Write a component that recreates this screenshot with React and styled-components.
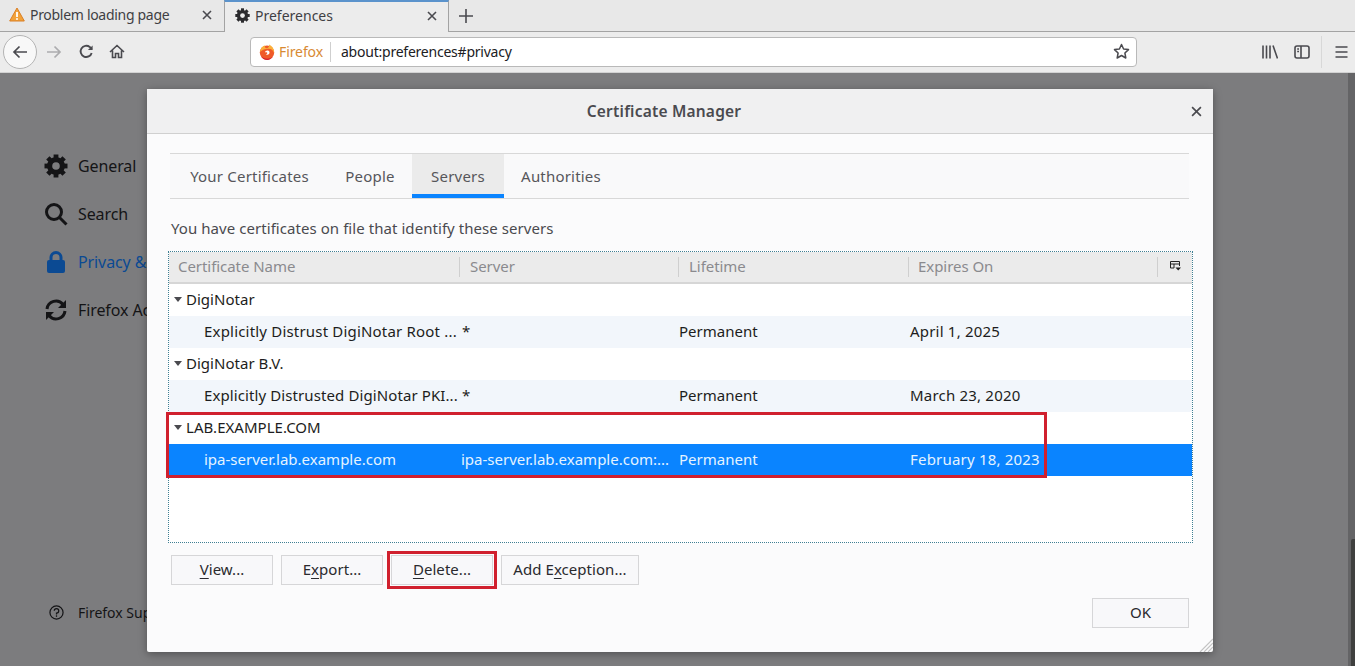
import React from 'react'
import styled, {createGlobalStyle} from 'styled-components'

const font = '"Noto Sans", "Open Sans", sans-serif'

const GlobalStyle = createGlobalStyle`
  html, body {
    margin: 0;
    padding: 0;
    height: 666px;
    overflow: hidden;
    font-family: ${font};
    background: #7c7c7e;
  }
  * { box-sizing: border-box; }
`

const Page = styled.div`
  width: 1355px;
  height: 666px;
  display: flex;
  flex-direction: column;
  overflow: hidden;
`

const TabBar = styled.div`
  height: 32px;
  display: flex;
  align-items: stretch;
  background: #e8e8e8;
  border-bottom: 1px solid #a3a3a3;
`

const Tab = styled.div`
  width: ${({active}) => active ? '225px' : '224px'};
  height: ${({active}) => active ? '32px' : '31px'};
  display: flex;
  align-items: center;
  gap: 5px;
  padding: ${({active}) => active ? '0 11px 3px 10px' : '0 12px 2px 9px'};
  font-size: 14px;
  letter-spacing: ${({active}) => active ? '0' : '-0.3px'};
  color: #3f3f44;
  background: ${({active}) => active ? '#ececec' : 'transparent'};
  border-top: ${({active}) => active ? '2px solid #5b93cc' : 'none'};
  border-left: ${({active}) => active ? '1px solid #a3a3a3' : 'none'};
  border-right: ${({active}) => active ? '1px solid #a3a3a3' : 'none'};
`

const TabTitle = styled.span`
  flex: 1;
  white-space: nowrap;
`

const NewTab = styled.div`
  width: 34px;
  display: flex;
  align-items: center;
  justify-content: center;
  color: #4a4a4f;
`

const NavBar = styled.div`
  height: 41px;
  display: flex;
  align-items: center;
  background: #ececec;
  border-bottom: 1px solid #d2d2d2;
  padding: 0 0 1px 3px;
`

const BackButton = styled.div`
  width: 34px;
  height: 34px;
  border-radius: 50%;
  border: 1px solid #b4b4b4;
  background: #f8f8f8;
  display: flex;
  align-items: center;
  justify-content: center;
  flex-shrink: 0;
`

const NavIcon = styled.div`
  width: ${({w}) => w}px;
  margin-left: ${({gap}) => gap || 0}px;
  height: 24px;
  display: flex;
  align-items: center;
  justify-content: center;
  flex-shrink: 0;
`

const UrlBar = styled.div`
  width: 887px;
  height: 30px;
  margin-left: 118px;
  margin-right: 125px;
  display: flex;
  align-items: center;
  background: #fff;
  border: 1px solid #b9b9b9;
  border-radius: 4px;
  padding: 0 6px 0 8px;
  flex-shrink: 0;
`

const Identity = styled.div`
  display: flex;
  align-items: center;
  gap: 4px;
  height: 20px;
  padding-right: 7px;
  border-right: 1px solid #cfcfcf;
  font-size: 14px;
  letter-spacing: -0.1px;
  color: #d88a33;
`

const UrlText = styled.div`
  flex: 1;
  padding-left: 10px;
  font-size: 14px;
  letter-spacing: -0.23px;
  color: #202023;
`

const ToolDivider = styled.div`
  width: 1px;
  height: 32px;
  background: #d8d8d8;
  margin: 0 6px 0 3px;
  flex-shrink: 0;
`

const Content = styled.div`
  position: relative;
  flex: 1;
  display: flex;
  justify-content: space-between;
  background: #7c7c7e;
  min-height: 0;
`

const Sidebar = styled.nav`
  display: flex;
  flex-direction: column;
  padding: 69px 0 0 44px;
  flex: 1;
`

const SideItem = styled.div`
  height: 48px;
  display: flex;
  align-items: center;
  gap: 10px;
  font-size: 16px;
  letter-spacing: -0.1px;
  white-space: nowrap;
  color: ${({active}) => active ? '#0b4a93' : '#141416'};
`

const SideFooter = styled.div`
  display: flex;
  align-items: center;
  gap: 14px;
  margin-top: auto;
  margin-bottom: 44px;
  padding-left: 5px;
  font-size: 14px;
  white-space: nowrap;
  color: #141416;
`

const ScrollTrack = styled.div`
  width: 7px;
  display: flex;
  justify-content: flex-end;
  padding-top: 466px;
  background: #646466;
`

const ScrollThumb = styled.div`
  width: 4px;
  background: #3f403f;
  border-radius: 2px 0 0 0;
`

const Dialog = styled.div`
  position: absolute;
  left: 147px;
  top: 16px;
  width: 1066px;
  height: 563px;
  display: flex;
  flex-direction: column;
  background: #fbfbfc;
  border-radius: 2px;
  box-shadow: 0 2px 8px rgba(0, 0, 0, 0.35);
`

const TitleBar = styled.div`
  position: relative;
  height: 45px;
  flex-shrink: 0;
  display: flex;
  align-items: center;
  justify-content: center;
  padding-right: 32px;
  background: #f0f0f1;
  border-bottom: 1px solid #d0d0d0;
  font-size: 15.5px;
  letter-spacing: 0.2px;
  font-weight: 600;
  color: #4a4a4f;
`

const CloseButton = styled.div`
  position: absolute;
  right: 11px;
  top: 17px;
  display: flex;
`

const DialogBody = styled.div`
  flex: 1;
  display: flex;
  flex-direction: column;
  padding: 19px 20px 0 21px;
  min-height: 0;
`

const TabStrip = styled.div`
  height: 46px;
  margin: 0 4px 0 2px;
  display: flex;
  background: #f9f9fa;
  border-top: 1px solid #d8d8d8;
  border-bottom: 1px solid #d8d8d8;
  padding-left: 1px;
  flex-shrink: 0;
`

const DialogTab = styled.div`
  width: ${({w}) => w}px;
  display: flex;
  align-items: center;
  justify-content: center;
  font-size: 15px;
  letter-spacing: 0.2px;
  color: #56565a;
  background: ${({active}) => active ? '#ebebeb' : 'transparent'};
  border-bottom: 4px solid ${({active}) => active ? '#0a84ff' : 'transparent'};
  padding-top: 4px;
`

const Description = styled.p`
  margin: 19px 0 13px 3px;
  font-size: 15px;
  line-height: 20px;
  letter-spacing: 0.06px;
  color: #4a4a4f;
`

const Tree = styled.div`
  position: relative;
  height: 292px;
  background: #fff;
  border: 1px dotted #3f7f93;
  flex-shrink: 0;
`

const columns = '290px 219px 230px 249px 35px'

const TreeHead = styled.div`
  display: grid;
  grid-template-columns: ${columns};
  height: 32px;
  align-items: center;
  background: #ebebeb;
  border-bottom: 2px solid #d6d6d6;
`

const HeadCell = styled.div`
  height: 20px;
  display: flex;
  align-items: center;
  padding: 0 0 2px ${({pad}) => pad}px;
  border-left: ${({first}) => first ? 'none' : '1px solid #cfcfcf'};
  font-size: 15px;
  letter-spacing: -0.05px;
  color: #8a8a8e;
`

const GroupRow = styled.div`
  height: 32px;
  display: flex;
  align-items: center;
  gap: 4px;
  padding: 0 0 2px 5px;
  background: #fff;
  font-size: 15px;
  letter-spacing: 0.02px;
  color: #1d1d20;
`

const Twisty = styled.span`
  width: 0;
  height: 0;
  border-left: 4.5px solid transparent;
  border-right: 4.5px solid transparent;
  border-top: 5px solid #4a4a4f;
`

const Row = styled.div`
  display: grid;
  grid-template-columns: ${columns};
  height: 32px;
  align-items: center;
  padding-bottom: 2px;
  font-size: 15px;
  background: ${({selected}) => selected ? '#0a84ff' : '#f2f6fb'};
  color: ${({selected}) => selected ? '#e4f3ff' : '#1d1d20'};
`

const Cell = styled.div`
  white-space: nowrap;
  overflow: hidden;
  padding-left: ${({pad}) => pad}px;
  letter-spacing: ${({tracking}) => tracking || 0}px;
`

const ButtonRow = styled.div`
  display: flex;
  gap: 8px;
  margin: 12px 0 0 3px;
`

const Button = styled.div`
  width: ${({w}) => w}px;
  height: 30px;
  display: flex;
  align-items: center;
  justify-content: center;
  padding-bottom: 2px;
  background: #f8f8fa;
  border: 1px solid #d6d6d8;
  font-size: 15px;
  letter-spacing: 0.05px;
  color: #2a2a2e;
`

const Mnemonic = styled.span`
  text-decoration: underline;
  text-underline-offset: 3px;
  text-decoration-thickness: 1px;
`

const Footer = styled.div`
  display: flex;
  justify-content: flex-end;
  margin: 13px 4px 0 0;
`

const Grip = styled.svg`
  position: absolute;
  right: 0;
  bottom: 0;
`

const Highlight = styled.div`
  position: absolute;
  left: ${({x}) => x}px;
  top: ${({y}) => y}px;
  width: ${({w}) => w}px;
  height: ${({h}) => h}px;
  border: 3px solid #d0202e;
  pointer-events: none;
`

const Gear = ({size, color = '#2b2b2e'}) =>
  <svg width={size} height={size} viewBox="0 0 24 24">
    <circle cx="12" cy="12" r="6.5" fill="none" stroke={color} strokeWidth="5"/>
    {[0, 45, 90, 135].map(a =>
      <rect key={a} x="9.6" y="0.5" width="4.8" height="23" fill={color} transform={`rotate(${a} 12 12)`}/>
    )}
    <circle cx="12" cy="12" r="3.8" fill="var(--hole)"/>
  </svg>

const Cross = ({size = 10, color = '#4a4a4f', width = 1.5}) =>
  <svg width={size} height={size} viewBox="0 0 10 10">
    <path d="M1 1 L9 9 M9 1 L1 9" stroke={color} strokeWidth={width} fill="none"/>
  </svg>

const Warning = () =>
  <svg width="16" height="15" viewBox="0 0 16 15">
    <path d="M8 1 L15.3 14 H0.7 Z" fill="#f2a23a" stroke="#d97f24" strokeWidth="1" strokeLinejoin="round"/>
    <path d="M8 5 V10" stroke="#fff" strokeWidth="1.8"/>
    <circle cx="8" cy="12" r="1" fill="#fff"/>
  </svg>

const FirefoxLogo = () =>
  <svg width="16" height="16" viewBox="0 0 16 16">
    <circle cx="8" cy="8.6" r="7.2" fill="#ef5a29"/>
    <path d="M1 8 C1.5 4 4 1.8 6 1.5 C5.5 3 6 4 7.5 4.3 C10 3.8 10.5 1.8 10 0.5 C13.5 2 15.5 5.5 15 9 C14 6 12.5 5 11 5 C8 4.5 4 5 1 8 Z" fill="#fbb03b"/>
    <path d="M6 8.5 C6 7 7.5 6.2 9 6.5 C10.5 7 11 8.5 10.2 9.8 C9.4 11 7.6 11 6.8 10.2 C7.8 10.2 8.6 9.5 8.2 8.7 C7.5 8.2 6.8 8.2 6 8.5 Z" fill="#fff"/>
    <path d="M2 12 C5 15 10 16 14 12.5 C12 15.5 9 16 8 16 C5.5 16 3.2 14.5 2 12 Z" fill="#d5202f"/>
  </svg>

const Stroke = styled.svg`
  display: block;
  fill: none;
  flex-shrink: 0;
  stroke: ${({color}) => color || '#4a4a4f'};
  stroke-width: ${({sw}) => sw || 2};
`

const App = () =>
  <Page>
    <GlobalStyle/>
    <TabBar>
      <Tab>
        <Warning/>
        <TabTitle>Problem loading page</TabTitle>
        <Cross size={10} width={1.6}/>
      </Tab>
      <Tab active style={{'--hole': '#ececec'}}>
        <Gear size={15}/>
        <TabTitle>Preferences</TabTitle>
        <Cross size={10} width={1.6}/>
      </Tab>
      <NewTab>
        <Stroke width="14" height="14" viewBox="0 0 14 14" sw={1.6}><path d="M7 0 V14 M0 7 H14"/></Stroke>
      </NewTab>
    </TabBar>
    <NavBar>
      <BackButton>
        <Stroke width="16" height="14" viewBox="0 0 16 14" sw={1.7}><path d="M15 7 H2 M7.5 1.5 L2 7 L7.5 12.5"/></Stroke>
      </BackButton>
      <NavIcon w={33}>
        <Stroke width="16" height="14" viewBox="0 0 16 14" sw={1.7} color="#acacae"><path d="M1 7 H14 M8.5 1.5 L14 7 L8.5 12.5"/></Stroke>
      </NavIcon>
      <NavIcon w={32}>
        <Stroke width="15" height="15" viewBox="0 0 16 16" sw={2}><path d="M13.5 9.5 A6 6 0 1 1 11.5 3.2 L13.5 5.5"/><path d="M14.5 1.5 V6.5 H9.5" fill="#4a4a4f" stroke="none"/></Stroke>
      </NavIcon>
      <NavIcon w={30}>
        <Stroke width="16" height="15" viewBox="0 0 16 15" sw={1.6}><path d="M1 8 L8 1.5 L15 8 M3.5 6.5 V13.5 H6.5 V9.5 H9.5 V13.5 H12.5 V6.5"/></Stroke>
      </NavIcon>
      <UrlBar>
        <Identity><FirefoxLogo/>Firefox</Identity>
        <UrlText>about:preferences#privacy</UrlText>
        <Stroke width="17" height="17" viewBox="0 0 17 17" sw={1.5}><path d="M8.5 1.5 L10.6 6 L15.5 6.6 L11.9 10 L12.8 15 L8.5 12.5 L4.2 15 L5.1 10 L1.5 6.6 L6.4 6 Z" strokeLinejoin="round"/></Stroke>
      </UrlBar>
      <NavIcon w={16}>
        <Stroke width="16" height="14" viewBox="0 0 16 14" sw={1.6}><path d="M1 0.5 V13.5 M4.5 0.5 V13.5 M8 0.5 V13.5 M11 0.5 L15.5 13.5"/></Stroke>
      </NavIcon>
      <NavIcon w={32} gap={8}>
        <Stroke width="16" height="14" viewBox="0 0 16 14" sw={1.6}><rect x="1" y="1" width="14" height="12" rx="2"/><path d="M7 1 V13 M3.2 4 H5 M3.2 6.5 H5"/></Stroke>
      </NavIcon>
      <ToolDivider/>
      <NavIcon w={26}>
        <Stroke width="13" height="12" viewBox="0 0 13 12" sw={1.7}><path d="M0.5 1 H12.5 M0.5 6 H12.5 M0.5 11 H12.5"/></Stroke>
      </NavIcon>
    </NavBar>
    <Content>
      <Sidebar style={{'--hole': '#7c7c7e'}}>
        <SideItem><Gear size={24} color="#141416"/>General</SideItem>
        <SideItem>
          <Stroke width="24" height="24" viewBox="0 0 24 24" sw={3} color="#141416"><circle cx="10" cy="10" r="7.5"/><path d="M15.5 15.5 L22.5 22.5"/></Stroke>
          Search
        </SideItem>
        <SideItem active>
          <svg width="24" height="24" viewBox="0 0 24 24">
            <path d="M7 11 V7.5 A5 5 0 0 1 17 7.5 V11" fill="none" stroke="#0b4a93" strokeWidth="3"/>
            <rect x="3" y="10" width="18" height="13" rx="2" fill="#0b4a93"/>
          </svg>
          Privacy &amp; Security
        </SideItem>
        <SideItem>
          <Stroke width="24" height="24" viewBox="0 0 24 24" sw={3} color="#141416">
            <path d="M3 11 A9 9 0 0 1 19 6.5"/>
            <path d="M21 13 A9 9 0 0 1 5 17.5"/>
            <path d="M22 2 V10 H14 Z" fill="#141416" stroke="none"/>
            <path d="M2 22 V14 H10 Z" fill="#141416" stroke="none"/>
          </Stroke>
          Firefox Account
        </SideItem>
        <SideFooter>
          <Stroke width="15" height="15" viewBox="0 0 16 16" sw={1.3} color="#141416">
            <circle cx="8" cy="8" r="7"/>
            <path d="M5.6 6.2 A2.4 2.4 0 1 1 8 8.6 V10"/>
            <path d="M8 11 V12.6"/>
          </Stroke>
          Firefox Support
        </SideFooter>
      </Sidebar>
      <ScrollTrack><ScrollThumb/></ScrollTrack>
      <Dialog>
        <TitleBar>
          Certificate Manager
          <CloseButton><Cross size={11} color="#4a4a4f" width={1.5}/></CloseButton>
        </TitleBar>
        <DialogBody>
          <TabStrip>
            <DialogTab w={157}>Your Certificates</DialogTab>
            <DialogTab w={84}>People</DialogTab>
            <DialogTab active w={92}>Servers</DialogTab>
            <DialogTab w={114}>Authorities</DialogTab>
          </TabStrip>
          <Description>You have certificates on file that identify these servers</Description>
          <Tree>
            <TreeHead>
              <HeadCell first pad={9}>Certificate Name</HeadCell>
              <HeadCell pad={10}>Server</HeadCell>
              <HeadCell pad={10}>Lifetime</HeadCell>
              <HeadCell pad={9}>Expires On</HeadCell>
              <HeadCell pad={12}>
                <svg width="11" height="10" viewBox="0 0 11 10">
                  <path d="M0.5 7 V0.5 H9.5 V5 M0.5 3 H9.5 M4 3 V7 H0.5" fill="none" stroke="#222" strokeWidth="1"/>
                  <path d="M5.5 6.5 H11 L8.2 9.5 Z" fill="#222"/>
                </svg>
              </HeadCell>
            </TreeHead>
            <GroupRow><Twisty/>DigiNotar</GroupRow>
            <Row>
              <Cell pad={35} tracking={0.19}>Explicitly Distrust DigiNotar Root ...</Cell>
              <Cell pad={3}>*</Cell>
              <Cell pad={1}>Permanent</Cell>
              <Cell pad={2} tracking={0.2}>April 1, 2025</Cell>
            </Row>
            <GroupRow><Twisty/>DigiNotar B.V.</GroupRow>
            <Row>
              <Cell pad={35} tracking={0.1}>Explicitly Distrusted DigiNotar PKI...</Cell>
              <Cell pad={3}>*</Cell>
              <Cell pad={1}>Permanent</Cell>
              <Cell pad={2} tracking={0.2}>March 23, 2020</Cell>
            </Row>
            <GroupRow><Twisty/>LAB.EXAMPLE.COM</GroupRow>
            <Row selected>
              <Cell pad={35}>ipa-server.lab.example.com</Cell>
              <Cell pad={2}>ipa-server.lab.example.com:...</Cell>
              <Cell pad={1}>Permanent</Cell>
              <Cell pad={2} tracking={0.2}>February 18, 2023</Cell>
            </Row>
            <Highlight x={-3} y={160} w={881} h={66}/>
          </Tree>
          <ButtonRow>
            <Button w={102}><span><Mnemonic>V</Mnemonic>iew...</span></Button>
            <Button w={102}><span>E<Mnemonic>x</Mnemonic>port...</span></Button>
            <Button w={102}><span><Mnemonic>D</Mnemonic>elete...</span></Button>
            <Button w={138}><span>Add E<Mnemonic>x</Mnemonic>ception...</span></Button>
          </ButtonRow>
          <Footer><Button w={97}>OK</Button></Footer>
        </DialogBody>
        <Highlight x={240} y={462} w={110} h={38}/>
        <Grip width="14" height="14" viewBox="0 0 14 14">
          <path d="M14 1 L1 14 M14 5 L5 14 M14 9 L9 14" stroke="#c4c4c4" strokeWidth="1.2"/>
        </Grip>
      </Dialog>
    </Content>
  </Page>

export default App
